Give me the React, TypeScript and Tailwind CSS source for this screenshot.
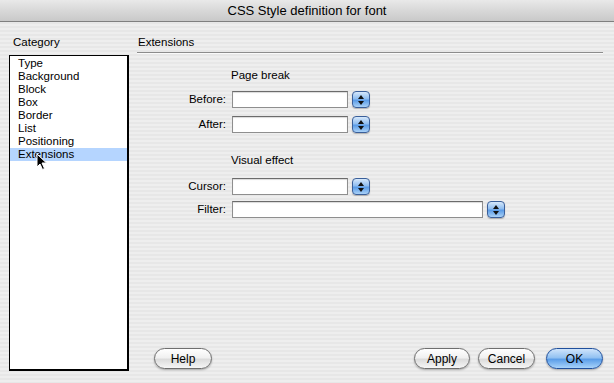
import React from 'react';

const font = "font-['Lucida_Grande','Liberation_Sans',Arial,sans-serif]";

const categories = ['Type', 'Background', 'Block', 'Box', 'Border', 'List', 'Positioning', 'Extensions'];

// Aqua popup stepper
const Stepper: React.FC = () => (
  <div className="w-[18px] h-[17px] rounded-[4px] border border-[#3a5f9a] bg-[linear-gradient(to_bottom,#d6e8fb_0%,#8fbdf0_45%,#5a9be6_55%,#a9d1f7_100%)] flex flex-col items-center justify-center gap-[2px] shadow-[0_1px_1px_rgba(0,0,0,0.25)]">
    <svg width="6" height="4" viewBox="0 0 6 4"><path d="M3 0 L6 4 L0 4 Z" fill="#111" /></svg>
    <svg width="6" height="4" viewBox="0 0 6 4"><path d="M0 0 L6 0 L3 4 Z" fill="#111" /></svg>
  </div>
);

interface FieldProps {
  label: string;
  inputWidth: string;
}

const Field: React.FC<FieldProps> = ({ label, inputWidth }) => (
  <div className="flex items-center h-[17px]">
    <div className="w-[90px] text-right text-[11.5px] text-black pr-[1px]">{label}</div>
    <div className={`ml-[5px] h-[17px] ${inputWidth} bg-white border border-[#8e8e8e] border-t-[#6b6b6b] shadow-[inset_0_1px_1px_rgba(0,0,0,0.15)]`} />
    <div className="ml-[4px]">
      <Stepper />
    </div>
  </div>
);

const AquaButton: React.FC<{ label: string; primary?: boolean; width: string }> = ({ label, primary, width }) => (
  <button
    className={`${width} h-[21px] rounded-full text-[12px] text-black flex items-center justify-center border ${
      primary
        ? 'border-[#1f4f9c] bg-[linear-gradient(to_bottom,#cfe4fb_0%,#93c2f2_45%,#5c9ee8_55%,#a8d3fa_100%)]'
        : 'border-[#6e6e6e] bg-[linear-gradient(to_bottom,#ffffff_0%,#f1f1f1_45%,#dcdcdc_55%,#f6f6f6_100%)]'
    } shadow-[0_1px_2px_rgba(0,0,0,0.3)]`}
  >
    {label}
  </button>
);

export default function App() {
  return (
    <div className={`w-[614px] h-[383px] flex flex-col overflow-hidden ${font} bg-[repeating-linear-gradient(to_bottom,#eeeeee_0px,#eeeeee_2px,#e7e7e7_2px,#e7e7e7_4px)]`}>
      {/* Title bar */}
      <div className="h-[22px] shrink-0 flex items-center justify-center border-b border-[#7f7f7f] bg-[linear-gradient(to_bottom,#e9e9e9_0%,#d8d8d8_50%,#c9c9c9_100%)]">
        <span className="text-[13px] text-black">CSS Style definition for font</span>
      </div>

      <div className="flex flex-1 min-h-0">
        {/* Category column */}
        <div className="w-[137px] shrink-0 pl-[9px] pt-[13px] pb-[12px] flex flex-col">
          <div className="text-[11.5px] text-black pl-[4px] h-[14px] leading-[14px]">Category</div>
          <div className="relative mt-[6px] flex-1 w-[120px] bg-white border border-black border-b-2 border-r-2 pt-[1px]">
            {categories.map((c) => (
              <div
                key={c}
                className={`h-[13px] leading-[13px] text-[11.5px] text-black pl-[8px] ${c === 'Extensions' ? 'bg-[#b5d5ff]' : ''}`}
              >
                {c}
              </div>
            ))}
            {/* mouse pointer */}
            <svg className="absolute left-[26px] top-[97px]" width="12" height="18" viewBox="0 0 12 18">
              <path d="M1 1 L1 14 L4 11 L6.5 16.5 L8.5 15.5 L6 10 L10.5 10 Z" fill="#000" stroke="#fff" strokeWidth="1" />
            </svg>
          </div>
        </div>

        {/* Right panel */}
        <div className="flex-1 flex flex-col pr-[11px] pt-[13px] pb-[14px]">
          <div className="text-[11.5px] text-black pl-[1px] h-[14px] leading-[14px]">Extensions</div>
          <div className="mt-[3px] h-[2px] border-t border-[#8c8c8c] border-b border-b-[#fafafa]" />

          <div className="mt-[14px] pl-[94px] text-[11.5px] text-black h-[14px] leading-[14px]">Page break</div>
          <div className="mt-[9px] flex flex-col gap-[8px]">
            <Field label="Before:" inputWidth="w-[116px]" />
            <Field label="After:" inputWidth="w-[116px]" />
          </div>

          <div className="mt-[20px] pl-[94px] text-[11.5px] text-black h-[14px] leading-[14px]">Visual effect</div>
          <div className="mt-[11px] flex flex-col gap-[6px]">
            <Field label="Cursor:" inputWidth="w-[116px]" />
            <Field label="Filter:" inputWidth="w-[251px]" />
          </div>

          <div className="mt-auto flex items-center pl-[17px]">
            <AquaButton label="Help" width="w-[58px]" />
            <div className="flex-1" />
            <AquaButton label="Apply" width="w-[56px]" />
            <div className="ml-[8px]">
              <AquaButton label="Cancel" width="w-[57px]" />
            </div>
            <div className="ml-[11px]">
              <AquaButton label="OK" primary width="w-[57px]" />
            </div>
          </div>
        </div>
      </div>
    </div>
  );
}
